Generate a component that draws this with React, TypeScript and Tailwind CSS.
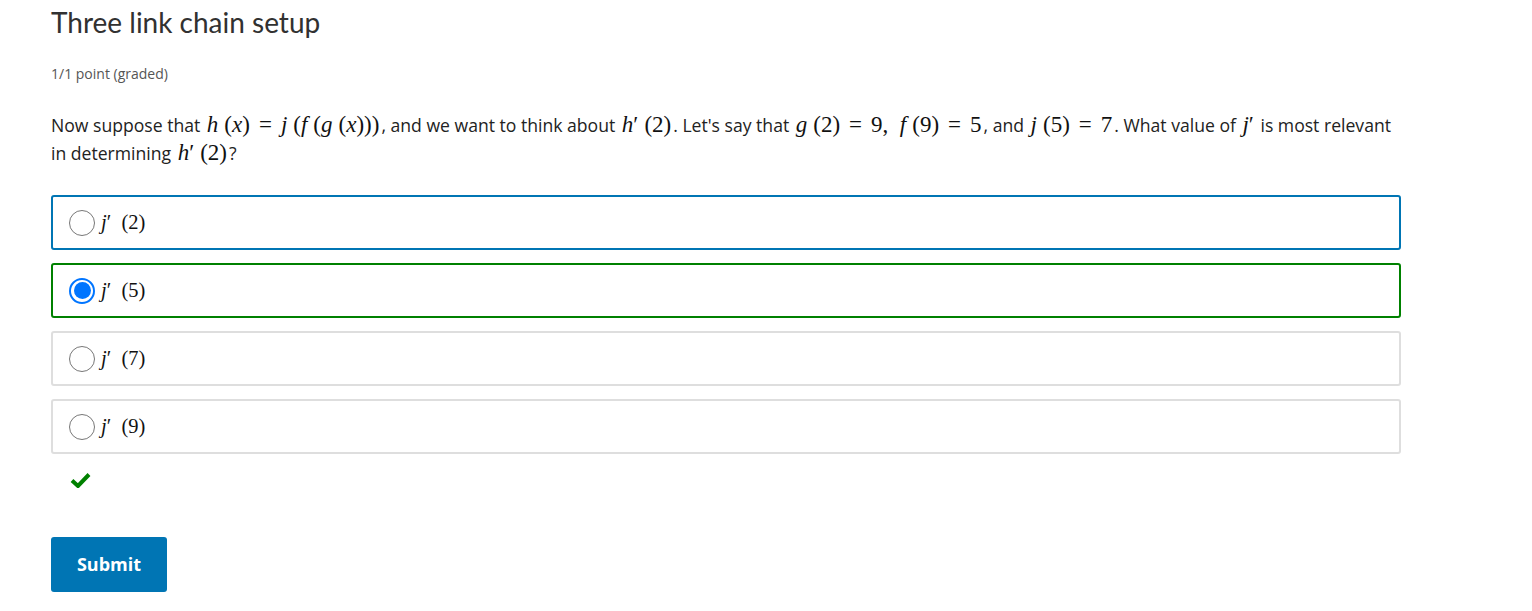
const sans = { fontFamily: '"Open Sans", Lato, sans-serif' };

function M({ children }: { children: React.ReactNode }) {
  return (
    <span
      className="whitespace-nowrap text-[23px] leading-none text-[#111] mx-[2px]"
      style={{ fontFamily: '"Liberation Serif", "DejaVu Serif", serif' }}
    >
      {children}
    </span>
  );
}

function I({ children }: { children: React.ReactNode }) {
  return <i>{children}</i>;
}

function Eq() {
  return <span className="mx-[9px]">=</span>;
}

function Sp() {
  return <span className="inline-block w-[6px]" />;
}

const OPTIONS = [
  { arg: '2', state: 'focus' },
  { arg: '5', state: 'correct' },
  { arg: '7', state: 'none' },
  { arg: '9', state: 'none' },
];

function Radio({ checked }: { checked: boolean }) {
  if (checked) {
    return (
      <span className="w-[26px] h-[26px] rounded-full border-2 border-[#0075ff] bg-white flex items-center justify-center shrink-0">
        <span className="w-[17px] h-[17px] rounded-full bg-[#0075ff]" />
      </span>
    );
  }
  return <span className="w-[26px] h-[26px] rounded-full border border-[#777] bg-white shrink-0" />;
}

export default function App() {
  return (
    <div className="min-h-screen bg-white px-[51px] pt-[3px] text-[#313131]" style={sans}>
      <h1 className="text-[28px] leading-[38px] text-[#313131]" style={{ fontFamily: 'Lato, sans-serif' }}>
        Three link chain setup
      </h1>
      <p className="mt-[22px] text-[14px] text-[#555]">1/1 point (graded)</p>

      <p className="mt-[27px] text-[17.6px] leading-[28px] text-[#222] max-w-[1380px]">
        Now suppose that{' '}
        <M>
          <I>h</I><Sp />(<I>x</I>)<Eq /><I>j</I><Sp />(<I>f</I><Sp />(<I>g</I><Sp />(<I>x</I>)))
        </M>
        , and we want to think about{' '}
        <M>
          <I>h</I>′<Sp />(2)
        </M>
        . Let's say that{' '}
        <M>
          <I>g</I><Sp />(2)<Eq />9,&ensp;<I>f</I><Sp />(9)<Eq />5
        </M>
        , and{' '}
        <M>
          <I>j</I><Sp />(5)<Eq />7
        </M>
        . What value of{' '}
        <M>
          <I>j</I>′
        </M>{' '}
        is most relevant
        <br />
        in determining{' '}
        <M>
          <I>h</I>′<Sp />(2)
        </M>
        ?
      </p>

      <div className="mt-[28px] w-[1350px] flex flex-col gap-[13px]">
        {OPTIONS.map((o) => (
          <label
            key={o.arg}
            className={
              'h-[55px] rounded-[3px] border-2 flex items-center gap-[6px] pl-[16px] ' +
              (o.state === 'focus'
                ? 'border-[#0075b4]'
                : o.state === 'correct'
                  ? 'border-[#008100]'
                  : 'border-[#dedede]')
            }
          >
            <Radio checked={o.state === 'correct'} />
            <span
              className="text-[20.5px] text-[#111]"
              style={{ fontFamily: '"Liberation Serif", "DejaVu Serif", serif' }}
            >
              <I>j</I>′&ensp;({o.arg})
            </span>
          </label>
        ))}
      </div>

      <div className="mt-[18px] pl-[19px]">
        <svg width="21" height="16" viewBox="0 0 21 16">
          <path d="M2 8.5 L8 14 L19 2.5" fill="none" stroke="#008100" strokeWidth="4" strokeLinejoin="miter" />
        </svg>
      </div>

      <button className="mt-[49px] w-[116px] h-[55px] rounded-[3px] bg-[#0075b4] text-white font-bold text-[18px]">
        Submit
      </button>
    </div>
  );
}
